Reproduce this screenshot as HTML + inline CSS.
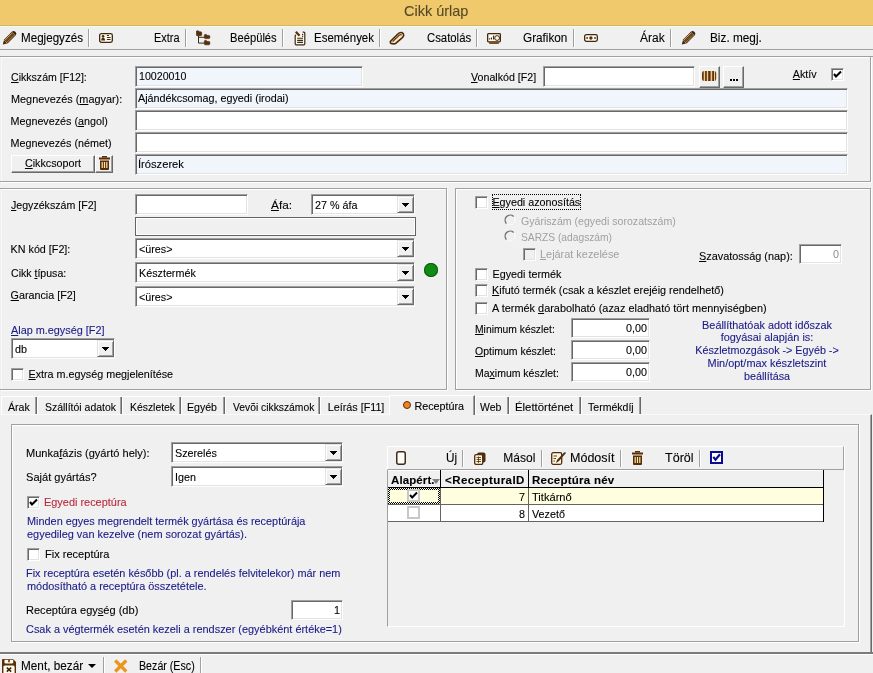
<!DOCTYPE html>
<html><head><meta charset="utf-8"><title>Cikk űrlap</title>
<style>
*{margin:0;padding:0}
body{width:873px;height:673px;position:relative;overflow:hidden;background:#f0f0f0;font-family:"Liberation Sans",sans-serif;font-size:11px;color:#000}
.a,.t,.sk,.rz,.cb{position:absolute}
.t{white-space:nowrap;-webkit-text-stroke-width:0.1px}
.sk{box-sizing:border-box;border:1px solid;border-color:#a0a0a0 #fff #fff #a0a0a0;box-shadow:inset 1px 1px 0 #696969,inset -1px -1px 0 #e3e3e3}
.rz{box-sizing:border-box;border:1px solid;border-color:#fff #696969 #696969 #fff;box-shadow:inset -1px -1px 0 #a0a0a0;background:#f0f0f0}
.cbtn{position:absolute;right:0;top:1px;width:17px;bottom:1px;box-sizing:border-box;border:1px solid;border-color:#e3e3e3 #696969 #696969 #e3e3e3;box-shadow:inset 1px 1px 0 #fff,inset -1px -1px 0 #a0a0a0;background:#f0f0f0}
.arr{position:absolute;left:4px;top:6px;width:7px;height:4px;background:linear-gradient(#000,#000) 0 0/7px 1px no-repeat,linear-gradient(#000,#000) 1px 1px/5px 1px no-repeat,linear-gradient(#000,#000) 2px 2px/3px 1px no-repeat,linear-gradient(#000,#000) 3px 3px/1px 1px no-repeat}
.cb{box-sizing:border-box;border:1px solid;border-color:#a0a0a0 #fff #fff #a0a0a0;box-shadow:inset 1px 1px 0 #696969,inset -1px -1px 0 #e3e3e3;background:#fff}
.cb.dis{background:#f0f0f0}
u{text-decoration:underline;text-underline-offset:1px}
.sep{position:absolute;width:1px;background:#a0a0a0;box-shadow:1px 0 0 #fff}
</style></head>
<body><div id="root" style="position:absolute;left:0;top:0;width:873px;height:673px;overflow:hidden;will-change:transform">
<div class="a" style="left:0;top:0;width:873px;height:26px;background:#f0c96c"></div>
<div class="t" style="left:403.5px;top:2.5px;font-size:14.6px;line-height:17px;transform:scaleX(0.9910);transform-origin:0 0;color:#544826;">Cikk úrlap</div>
<div class="a" style="left:0px;top:25px;width:873px;height:1px;background:#d2b46c"></div>
<div class="a" style="left:0px;top:26px;width:873px;height:1px;background:#fdf9e8"></div>
<div class="a" style="left:0px;top:49px;width:873px;height:1px;background:#a0a0a0"></div>
<div class="a" style="left:0px;top:56px;width:873px;height:1px;background:#a0a0a0"></div>
<div class="t" style="left:20.7px;top:31px;font-size:12px;line-height:14px;transform:scaleX(0.9683);transform-origin:0 0;-webkit-text-stroke-width:0.1px;">Megjegyzés</div>
<div class="t" style="left:153.7px;top:31px;font-size:12px;line-height:14px;transform:scaleX(0.9105);transform-origin:0 0;-webkit-text-stroke-width:0.1px;">Extra</div>
<div class="t" style="left:229.7px;top:31px;font-size:12px;line-height:14px;transform:scaleX(0.9333);transform-origin:0 0;-webkit-text-stroke-width:0.1px;">Beépülés</div>
<div class="t" style="left:314.2px;top:31px;font-size:12px;line-height:14px;transform:scaleX(0.9570);transform-origin:0 0;-webkit-text-stroke-width:0.1px;">Események</div>
<div class="t" style="left:426.5px;top:31px;font-size:12px;line-height:14px;transform:scaleX(0.9446);transform-origin:0 0;-webkit-text-stroke-width:0.1px;">Csatolás</div>
<div class="t" style="left:522.7px;top:31px;font-size:12px;line-height:14px;transform:scaleX(0.9790);transform-origin:0 0;-webkit-text-stroke-width:0.1px;">Grafikon</div>
<div class="t" style="left:640px;top:31px;font-size:12px;line-height:14px;-webkit-text-stroke-width:0.1px;">Árak</div>
<div class="t" style="left:710px;top:31px;font-size:12px;line-height:14px;transform:scaleX(0.9833);transform-origin:0 0;-webkit-text-stroke-width:0.1px;">Biz. megj.</div>
<div class="sep" style="left:88px;top:29px;height:18px"></div>
<div class="sep" style="left:185px;top:29px;height:18px"></div>
<div class="sep" style="left:282px;top:29px;height:18px"></div>
<div class="sep" style="left:379px;top:29px;height:18px"></div>
<div class="sep" style="left:476px;top:29px;height:18px"></div>
<div class="sep" style="left:573px;top:29px;height:18px"></div>
<div class="sep" style="left:670px;top:29px;height:18px"></div>
<svg class="a" style="left:1px;top:30px" width="17" height="16" viewBox="0 0 17 16"><path d="M1.8 14.6 L3.2 9.4 L10.9 1.7 Q12.6 0.2 14.6 1.9 Q16.3 3.6 14.5 5.5 L6.8 13.2 Z" fill="#3e2408"/><path d="M5.2 10.8 L11.6 4.4" stroke="#8a4e14" stroke-width="1.6"/><path d="M3.9 10.1 L10.8 3.2 M6.1 12.3 L13 5.4 M10.9 2.3 L14 5.4 M3.4 10.2 L6.2 13" stroke="#f3d6a4" stroke-width="0.7"/></svg>
<svg class="a" style="left:680px;top:30px" width="17" height="16" viewBox="0 0 17 16"><path d="M1.8 14.6 L3.2 9.4 L10.9 1.7 Q12.6 0.2 14.6 1.9 Q16.3 3.6 14.5 5.5 L6.8 13.2 Z" fill="#3e2408"/><path d="M5.2 10.8 L11.6 4.4" stroke="#8a4e14" stroke-width="1.6"/><path d="M3.9 10.1 L10.8 3.2 M6.1 12.3 L13 5.4 M10.9 2.3 L14 5.4 M3.4 10.2 L6.2 13" stroke="#f3d6a4" stroke-width="0.7"/></svg>
<svg class="a" style="left:99px;top:33px" width="14" height="10" viewBox="0 0 14 10"><rect x="0.65" y="0.65" width="12.7" height="8.7" rx="1.8" fill="#fffaf0" stroke="#3e2810" stroke-width="1.3"/><circle cx="4.1" cy="3.2" r="1.3" fill="#4a2a0c"/><path d="M2.2 7.6 Q2.4 4.4 4.1 4.4 Q5.8 4.4 6.1 7.6 Z" fill="#4a2a0c"/><path d="M7.9 2.5 H10 M7.9 4.5 H11.6 M7.9 6.5 H11.6" stroke="#3e2810" stroke-width="1.2"/></svg>
<svg class="a" style="left:196px;top:30px" width="15" height="16" viewBox="0 0 15 16"><path d="M0.3 1.8 Q0.3 0.8 1.3 0.8 H2.3 L3.3 1.8 H4.7 Q5.7 1.8 5.7 2.8 V4.7 Q5.7 5.7 4.7 5.7 H1.3 Q0.3 5.7 0.3 4.7 Z" fill="#5a3008" stroke="#3a1e04" stroke-width="0.6"/><path d="M8.3 5.4 Q8.3 4.4 9.3 4.4 H10.3 L11.3 5.4 H12.8 Q13.8 5.4 13.8 6.4 V7.600000000000001 Q13.8 8.600000000000001 12.8 8.600000000000001 H9.3 Q8.3 8.600000000000001 8.3 7.600000000000001 Z" fill="#5a3008" stroke="#3a1e04" stroke-width="0.6"/><path d="M8.3 11.4 Q8.3 10.4 9.3 10.4 H10.3 L11.3 11.4 H12.8 Q13.8 11.4 13.8 12.4 V13.8 Q13.8 14.8 12.8 14.8 H9.3 Q8.3 14.8 8.3 13.8 Z" fill="#5a3008" stroke="#3a1e04" stroke-width="0.6"/><path d="M2.5 5.6 V13.1 H8.4 M2.5 7.3 H8.4" stroke="#3e2810" stroke-width="1" fill="none"/></svg>
<svg class="a" style="left:294px;top:31px" width="12" height="15" viewBox="0 0 12 15"><path d="M2.2 4 Q1.2 4 1.2 5 V12.8 Q1.2 13.8 2.2 13.8 H9.8 Q10.8 13.8 10.8 12.8 V2.2 Q10.8 1.2 9.8 1.2 H8.6" stroke="#3e2810" stroke-width="1.2" fill="#fffaf0"/><path d="M1.8 0.8 L5.6 4.8" stroke="#5a3008" stroke-width="2.2"/><circle cx="8.6" cy="3.4" r="0.7" fill="#3e2810"/><circle cx="8.6" cy="5.2" r="0.7" fill="#3e2810"/><path d="M3.2 7.3 H9 M3.2 9.4 H9 M3.2 11.4 H9" stroke="#3e2810" stroke-width="1.1"/></svg>
<svg class="a" style="left:389px;top:31px" width="16" height="14" viewBox="0 0 16 14"><path d="M3 12.6 Q1 12.6 1.4 10.4 L8.6 3.2 Q10.6 1.2 12.8 1.6 Q15 2.4 14.6 4.6 Q14.4 5.6 13.4 6.6 L7 12.2 Q5.2 13.2 3 12.6 Z" fill="#fbe6c6" stroke="#4a2a0c" stroke-width="1.6"/><path d="M3.6 10.6 L10.2 4.2 Q11.6 3.2 12.6 4.2" fill="none" stroke="#6a3a10" stroke-width="1.3"/></svg>
<svg class="a" style="left:487px;top:33px" width="14" height="11" viewBox="0 0 14 11"><rect x="0.65" y="0.65" width="12.7" height="8.2" rx="0.8" fill="#fffaf0" stroke="#3e2810" stroke-width="1.3"/><path d="M2.6 6.6 V5.2 M4.5 6.6 V4.6 M6.6 6.6 V2.4" stroke="#3e2810" stroke-width="1.1"/><circle cx="10.1" cy="5" r="2.4" fill="#fffaf0" stroke="#3e2810" stroke-width="1"/><rect x="2.2" y="8.8" width="9.6" height="2.2" fill="#7a5024"/></svg>
<svg class="a" style="left:584px;top:34px" width="14" height="8" viewBox="0 0 14 8"><rect x="0.65" y="0.65" width="12.7" height="6.7" rx="1.8" fill="#fffaf0" stroke="#3e2810" stroke-width="1.3"/><circle cx="6.9" cy="4" r="1.7" fill="#5a3008"/><rect x="2.3" y="3.2" width="1.6" height="1.6" fill="#3e2810"/><rect x="10.2" y="3.2" width="1.6" height="1.6" fill="#3e2810"/></svg>
<div class="a" style="left:1px;top:57px;width:871px;height:1px;background:#fff"></div>
<div class="a" style="left:1px;top:182px;width:871px;height:1px;background:#fff"></div>
<div class="a" style="left:871px;top:57px;width:1px;height:126px;background:#fff"></div>
<div class="a" style="left:1px;top:57px;width:1px;height:125px;background:#f8f8f8"></div>
<div class="a" style="left:0px;top:56px;width:871px;height:1px;background:#a0a0a0"></div>
<div class="a" style="left:0px;top:181px;width:871px;height:1px;background:#a0a0a0"></div>
<div class="a" style="left:870px;top:56px;width:1px;height:126px;background:#a0a0a0"></div>
<div class="t" style="left:10.5px;top:71px;font-size:10.75px;line-height:12px;transform:scaleX(0.9837);transform-origin:0 0;"><u>C</u>ikkszám [F12]:</div>
<div class="t" style="left:10.5px;top:93px;font-size:10.75px;line-height:12px;transform:scaleX(1.0116);transform-origin:0 0;">Megnevezés (<u>m</u>agyar):</div>
<div class="t" style="left:10.5px;top:115px;font-size:10.75px;line-height:12px;">Megnevezés (<u>a</u>ngol)</div>
<div class="t" style="left:10.5px;top:137px;font-size:10.75px;line-height:12px;">Megnevezés (német)</div>
<div class="sk" style="left:135px;top:66px;width:228px;height:21px;background:#f1f5fc"></div>
<div class="t" style="left:138.5px;top:70px;font-size:10.75px;line-height:12px;transform:scaleX(0.9889);transform-origin:0 0;">10020010</div>
<div class="sk" style="left:135px;top:88px;width:713px;height:21px;background:#f1f5fc"></div>
<div class="t" style="left:138px;top:92px;font-size:10.75px;line-height:12px;">Ajándékcsomag, egyedi (irodai)</div>
<div class="sk" style="left:135px;top:110px;width:713px;height:21px;background:#fff"></div>
<div class="sk" style="left:135px;top:132px;width:713px;height:21px;background:#fff"></div>
<div class="sk" style="left:135px;top:154px;width:713px;height:21px;background:#f1f5fc"></div>
<div class="t" style="left:137.5px;top:158px;font-size:10.75px;line-height:12px;transform:scaleX(1.0383);transform-origin:0 0;">Írószerek</div>
<div class="rz" style="left:11px;top:155px;width:84px;height:18px;"></div>
<div class="t" style="left:11px;top:157px;font-size:10.75px;line-height:12px;width:84px;text-align:center;"><u>C</u>ikkcsoport</div>
<div class="rz" style="left:95px;top:155px;width:18px;height:18px;"></div>
<svg class="a" style="left:99px;top:156px" width="11" height="14" viewBox="0 0 11 14"><rect x="3" y="0" width="5" height="1.5" fill="#5a2e00"/><rect x="0" y="1.5" width="11" height="2" fill="#5a2e00"/><path d="M1 4.5 H10 V13 Q10 14 9 14 H2 Q1 14 1 13 Z" fill="#5a2e00"/><rect x="2.6" y="6" width="1.2" height="6" fill="#ffe6b0"/><rect x="4.9" y="6" width="1.2" height="6" fill="#ffe6b0"/><rect x="7.2" y="6" width="1.2" height="6" fill="#ffe6b0"/></svg>
<div class="t" style="left:471px;top:71px;font-size:10.75px;line-height:12px;transform:scaleX(0.9918);transform-origin:0 0;"><u>V</u>onalkód [F2]</div>
<div class="sk" style="left:543px;top:66px;width:152px;height:21px;background:#fff"></div>
<div class="rz" style="left:699px;top:66px;width:21px;height:22px;"></div>
<svg class="a" style="left:702px;top:71px" width="15" height="10" viewBox="0 0 15 10"><rect x="0" y="0" width="14.2" height="10" rx="2.2" fill="#5e3208"/><rect x="1.7" y="0" width="1.4" height="10" fill="#f2c890"/><rect x="4.8" y="0" width="1.4" height="10" fill="#f2c890"/><rect x="8.6" y="0" width="1.6" height="10" fill="#f2c890"/><rect x="12" y="0" width="1.1" height="10" fill="#f2c890"/></svg>
<div class="rz" style="left:723px;top:66px;width:21px;height:22px;"></div>
<div class="a" style="left:729.5px;top:79px;width:8px;height:2px;background:repeating-linear-gradient(90deg,#000 0 2px,transparent 2px 3px)"></div>
<div class="t" style="left:792.8px;top:68px;font-size:10.75px;line-height:12px;"><u>A</u>ktív</div>
<div class="cb" style="left:831px;top:68px;width:13px;height:13px;"><svg width="9" height="9" viewBox="0 0 9 9" style="position:absolute;left:1px;top:1px"><path d="M1 4 L3 6.5 L8 1.5" stroke="#000" stroke-width="2.1" fill="none"/></svg></div>
<div class="a" style="left:1px;top:189px;width:447px;height:1px;background:#fff"></div>
<div class="a" style="left:1px;top:390px;width:447px;height:1px;background:#fff"></div>
<div class="a" style="left:447px;top:189px;width:1px;height:202px;background:#fff"></div>
<div class="a" style="left:1px;top:189px;width:1px;height:201px;background:#f8f8f8"></div>
<div class="a" style="left:0px;top:188px;width:447px;height:1px;background:#a0a0a0"></div>
<div class="a" style="left:0px;top:389px;width:447px;height:1px;background:#a0a0a0"></div>
<div class="a" style="left:446px;top:188px;width:1px;height:202px;background:#a0a0a0"></div>
<div class="t" style="left:10.6px;top:199px;font-size:10.75px;line-height:12px;transform:scaleX(0.9870);transform-origin:0 0;"><u>J</u>egyzékszám [F2]</div>
<div class="sk" style="left:135px;top:194px;width:113px;height:21px;background:#fff"></div>
<div class="t" style="left:270.5px;top:199px;font-size:10.75px;line-height:12px;transform:scaleX(1.0982);transform-origin:0 0;"><u>Á</u>fa:</div>
<div class="sk" style="left:311px;top:194px;width:104px;height:21px;background:#fff"><div class="cbtn"><div class="arr"></div></div></div>
<div class="t" style="left:315px;top:199px;font-size:10.75px;line-height:12px;">27 % áfa</div>
<div class="a" style="left:135px;top:217px;width:281px;height:19px;box-sizing:border-box;border:1px solid #646464;box-shadow:inset 1px 1px 0 #fff,inset -1px -1px 0 #fff;background:#f0f0f0"></div>
<div class="t" style="left:10.6px;top:243px;font-size:10.75px;line-height:12px;">KN kód [F2]:</div>
<div class="sk" style="left:135px;top:238px;width:280px;height:21px;background:#fff"><div class="cbtn"><div class="arr"></div></div></div>
<div class="t" style="left:139px;top:243px;font-size:10.75px;line-height:12px;">&lt;üres&gt;</div>
<div class="t" style="left:10.6px;top:267px;font-size:10.75px;line-height:12px;transform:scaleX(0.9829);transform-origin:0 0;">Cikk <u>t</u>ípusa:</div>
<div class="sk" style="left:135px;top:262px;width:280px;height:21px;background:#fff"><div class="cbtn"><div class="arr"></div></div></div>
<div class="t" style="left:139px;top:267px;font-size:10.75px;line-height:12px;">Késztermék</div>
<div class="t" style="left:10.6px;top:289px;font-size:10.75px;line-height:12px;"><u>G</u>arancia [F2]</div>
<div class="sk" style="left:135px;top:286px;width:280px;height:21px;background:#fff"><div class="cbtn"><div class="arr"></div></div></div>
<div class="t" style="left:139px;top:291px;font-size:10.75px;line-height:12px;">&lt;üres&gt;</div>
<div class="a" style="left:424px;top:263px;width:14px;height:14px;border-radius:50%;background:#138a13;box-shadow:inset 0 0 0 1px #0b5e0b"></div>
<div class="t" style="left:10.6px;top:324px;font-size:10.75px;line-height:12px;transform:scaleX(1.0096);transform-origin:0 0;color:#1a1a88;"><u>A</u>lap m.egység [F2]</div>
<div class="sk" style="left:11px;top:338px;width:104px;height:21px;background:#fff"><div class="cbtn"><div class="arr"></div></div></div>
<div class="t" style="left:15px;top:343px;font-size:10.75px;line-height:12px;">db</div>
<div class="cb" style="left:11px;top:368px;width:13px;height:13px;"></div>
<div class="t" style="left:28.5px;top:368px;font-size:10.75px;line-height:12px;"><u>E</u>xtra m.egység megjelenítése</div>
<div class="a" style="left:456px;top:189px;width:416px;height:202px;border:1px solid #fff;box-sizing:border-box"></div>
<div class="a" style="left:455px;top:188px;width:416px;height:202px;border:1px solid #a0a0a0;box-sizing:border-box"></div>
<div class="cb" style="left:475px;top:196px;width:13px;height:13px;"></div>
<div class="t" style="left:492.4px;top:196px;font-size:10.75px;line-height:12px;"><u>E</u>gyedi azonosítás</div>
<div class="a" style="left:492px;top:194px;width:89px;height:16px;box-sizing:border-box;border:1px dotted #000"></div>
<svg class="a" style="left:504px;top:214px" width="12" height="12" viewBox="0 0 12 12"><circle cx="6" cy="6" r="5" fill="#f0f0f0" stroke="#fafafa" stroke-width="1"/><path d="M9.6 2.4 A5.1 5.1 0 0 0 2.4 9.6" stroke="#6e6e6e" stroke-width="1.4" fill="none"/></svg>
<div class="t" style="left:521px;top:215px;font-size:10.75px;line-height:12px;transform:scaleX(0.9853);transform-origin:0 0;color:#a0a0a0;-webkit-text-stroke-width:0;">Gyáriszám (egyedi sorozatszám)</div>
<svg class="a" style="left:504px;top:230px" width="12" height="12" viewBox="0 0 12 12"><circle cx="6" cy="6" r="5" fill="#f0f0f0" stroke="#fafafa" stroke-width="1"/><path d="M9.6 2.4 A5.1 5.1 0 0 0 2.4 9.6" stroke="#6e6e6e" stroke-width="1.4" fill="none"/></svg>
<div class="t" style="left:521px;top:231px;font-size:10.75px;line-height:12px;transform:scaleX(0.9520);transform-origin:0 0;color:#a0a0a0;-webkit-text-stroke-width:0;">SARZS (adagszám)</div>
<div class="cb dis" style="left:523px;top:248px;width:13px;height:13px;"></div>
<div class="t" style="left:540px;top:248px;font-size:10.75px;line-height:12px;transform:scaleX(1.0143);transform-origin:0 0;color:#a0a0a0;-webkit-text-stroke-width:0;"><u>L</u>ejárat kezelése</div>
<div class="t" style="left:698.8px;top:250px;font-size:10.75px;line-height:12px;transform:scaleX(1.0128);transform-origin:0 0;"><u>S</u>zavatosság (nap):</div>
<div class="sk" style="left:799px;top:244px;width:43px;height:20px;background:#fff"></div>
<div class="t" style="left:799px;top:248px;font-size:10.75px;line-height:12px;color:#8c8c8c;-webkit-text-stroke-width:0;width:40px;text-align:right;">0</div>
<div class="cb" style="left:475px;top:268px;width:13px;height:13px;"></div>
<div class="t" style="left:492.6px;top:268px;font-size:10.75px;line-height:12px;">Egyedi termék</div>
<div class="cb" style="left:475px;top:284px;width:13px;height:13px;"></div>
<div class="t" style="left:492.3px;top:284px;font-size:10.75px;line-height:12px;transform:scaleX(1.0081);transform-origin:0 0;"><u>K</u>ifutó termék (csak a készlet erejéig rendelhető)</div>
<div class="cb" style="left:475px;top:302px;width:13px;height:13px;"></div>
<div class="t" style="left:492.3px;top:302px;font-size:10.75px;line-height:12px;transform:scaleX(1.0144);transform-origin:0 0;">A termék <u>d</u>arabolható (azaz eladható tört mennyiségben)</div>
<div class="t" style="left:474.9px;top:323px;font-size:10.75px;line-height:12px;transform:scaleX(0.9611);transform-origin:0 0;"><u>M</u>inimum készlet:</div>
<div class="t" style="left:474.9px;top:345px;font-size:10.75px;line-height:12px;transform:scaleX(0.9743);transform-origin:0 0;"><u>O</u>ptimum készlet:</div>
<div class="t" style="left:474.9px;top:367px;font-size:10.75px;line-height:12px;transform:scaleX(0.9754);transform-origin:0 0;">Ma<u>x</u>imum készlet:</div>
<div class="sk" style="left:571px;top:318px;width:79px;height:20px;background:#fff"></div>
<div class="t" style="left:571px;top:322px;font-size:10.75px;line-height:12px;width:76px;text-align:right;">0,00</div>
<div class="sk" style="left:571px;top:340px;width:79px;height:20px;background:#fff"></div>
<div class="t" style="left:571px;top:344px;font-size:10.75px;line-height:12px;width:76px;text-align:right;">0,00</div>
<div class="sk" style="left:571px;top:362px;width:79px;height:20px;background:#fff"></div>
<div class="t" style="left:571px;top:366px;font-size:10.75px;line-height:12px;width:76px;text-align:right;">0,00</div>
<div class="t" style="left:667px;top:319px;font-size:10.75px;line-height:12px;transform:scaleX(1.0102);transform-origin:50% 0;color:#1a1a88;width:200px;text-align:center;">Beállíthatóak adott időszak</div>
<div class="t" style="left:667px;top:331px;font-size:10.75px;line-height:12px;transform:scaleX(1.0128);transform-origin:50% 0;color:#1a1a88;width:200px;text-align:center;">fogyásai alapján is:</div>
<div class="t" style="left:667px;top:344px;font-size:10.75px;line-height:12px;color:#1a1a88;width:200px;text-align:center;">Készletmozgások -&gt; Egyéb -&gt;</div>
<div class="t" style="left:667px;top:357px;font-size:10.75px;line-height:12px;transform:scaleX(1.0146);transform-origin:50% 0;color:#1a1a88;width:200px;text-align:center;">Min/opt/max készletszint</div>
<div class="t" style="left:667px;top:370px;font-size:10.75px;line-height:12px;color:#1a1a88;width:200px;text-align:center;">beállítása</div>
<div class="a" style="left:0;top:414px;width:872px;height:240px;box-sizing:border-box;border-top:1px solid #fafafa;border-right:1px solid #696969;border-bottom:1px solid #696969;box-shadow:inset -1px -1px 0 #a0a0a0"></div>
<div class="a" style="left:1px;top:396px;width:36px;height:18px;box-sizing:border-box;border-top:1px solid #fff;border-left:1px solid #fff;border-top-left-radius:2px;box-shadow:inset -1px 0 0 #696969,inset -2px 0 0 #a0a0a0"></div>
<div class="t" style="left:8px;top:401px;font-size:10.75px;line-height:12px;transform:scaleX(0.9863);transform-origin:0 0;">Árak</div>
<div class="a" style="left:37px;top:396px;width:85px;height:18px;box-sizing:border-box;border-top:1px solid #fff;border-left:1px solid #fff;border-top-left-radius:2px;box-shadow:inset -1px 0 0 #696969,inset -2px 0 0 #a0a0a0"></div>
<div class="t" style="left:45.4px;top:401px;font-size:10.75px;line-height:12px;transform:scaleX(0.9739);transform-origin:0 0;">Szállítói adatok</div>
<div class="a" style="left:122px;top:396px;width:59px;height:18px;box-sizing:border-box;border-top:1px solid #fff;border-left:1px solid #fff;border-top-left-radius:2px;box-shadow:inset -1px 0 0 #696969,inset -2px 0 0 #a0a0a0"></div>
<div class="t" style="left:130px;top:401px;font-size:10.75px;line-height:12px;transform:scaleX(0.9655);transform-origin:0 0;">Készletek</div>
<div class="a" style="left:181px;top:396px;width:44px;height:18px;box-sizing:border-box;border-top:1px solid #fff;border-left:1px solid #fff;border-top-left-radius:2px;box-shadow:inset -1px 0 0 #696969,inset -2px 0 0 #a0a0a0"></div>
<div class="t" style="left:187px;top:401px;font-size:10.75px;line-height:12px;transform:scaleX(0.9842);transform-origin:0 0;">Egyéb</div>
<div class="a" style="left:225px;top:396px;width:95px;height:18px;box-sizing:border-box;border-top:1px solid #fff;border-left:1px solid #fff;border-top-left-radius:2px;box-shadow:inset -1px 0 0 #696969,inset -2px 0 0 #a0a0a0"></div>
<div class="t" style="left:233.4px;top:401px;font-size:10.75px;line-height:12px;transform:scaleX(0.9583);transform-origin:0 0;">Vevõi cikkszámok</div>
<div class="a" style="left:320px;top:396px;width:70px;height:18px;box-sizing:border-box;border-top:1px solid #fff;border-left:1px solid #fff;border-top-left-radius:2px;"></div>
<div class="t" style="left:327.8px;top:401px;font-size:10.75px;line-height:12px;">Leírás [F11]</div>
<div class="a" style="left:475px;top:396px;width:34px;height:18px;box-sizing:border-box;border-top:1px solid #fff;border-left:1px solid #fff;border-top-left-radius:2px;box-shadow:inset -1px 0 0 #696969,inset -2px 0 0 #a0a0a0"></div>
<div class="t" style="left:479.7px;top:401px;font-size:10.75px;line-height:12px;transform:scaleX(0.9722);transform-origin:0 0;">Web</div>
<div class="a" style="left:509px;top:396px;width:72px;height:18px;box-sizing:border-box;border-top:1px solid #fff;border-left:1px solid #fff;border-top-left-radius:2px;box-shadow:inset -1px 0 0 #696969,inset -2px 0 0 #a0a0a0"></div>
<div class="t" style="left:515.4px;top:401px;font-size:10.75px;line-height:12px;transform:scaleX(1.0586);transform-origin:0 0;">Élettörténet</div>
<div class="a" style="left:581px;top:396px;width:60px;height:18px;box-sizing:border-box;border-top:1px solid #fff;border-left:1px solid #fff;border-top-left-radius:2px;box-shadow:inset -1px 0 0 #696969,inset -2px 0 0 #a0a0a0"></div>
<div class="t" style="left:587.6px;top:401px;font-size:10.75px;line-height:12px;transform:scaleX(0.9808);transform-origin:0 0;">Termékdíj</div>
<div class="a" style="left:389px;top:395px;width:86px;height:20px;background:#f0f0f0;box-sizing:border-box;border-top:1px solid #fff;border-left:1px solid #fff;border-right:1px solid #696969;box-shadow:inset -1px 0 0 #a0a0a0"></div>
<div class="a" style="left:403px;top:401px;width:8px;height:8px;border-radius:50%;background:#f58220;box-sizing:border-box;border:1px solid #5a3000"></div>
<div class="t" style="left:414.4px;top:400px;font-size:10.75px;line-height:12px;">Receptúra</div>
<div class="a" style="left:12px;top:425px;width:848px;height:218px;border:1px solid #fff;box-sizing:border-box"></div>
<div class="a" style="left:11px;top:424px;width:848px;height:218px;border:1px solid #a0a0a0;box-sizing:border-box"></div>
<div class="t" style="left:26.3px;top:447px;font-size:10.75px;line-height:12px;transform:scaleX(1.0284);transform-origin:0 0;">Munka<u>f</u>ázis (gyártó hely):</div>
<div class="sk" style="left:171px;top:442px;width:172px;height:21px;background:#fff"><div class="cbtn"><div class="arr"></div></div></div>
<div class="t" style="left:175px;top:447px;font-size:10.75px;line-height:12px;">Szerelés</div>
<div class="t" style="left:26.3px;top:471px;font-size:10.75px;line-height:12px;transform:scaleX(1.0288);transform-origin:0 0;">Saját gyártás?</div>
<div class="sk" style="left:171px;top:466px;width:172px;height:21px;background:#fff"><div class="cbtn"><div class="arr"></div></div></div>
<div class="t" style="left:175px;top:471px;font-size:10.75px;line-height:12px;">Igen</div>
<div class="cb" style="left:27px;top:496px;width:13px;height:13px;"><svg width="9" height="9" viewBox="0 0 9 9" style="position:absolute;left:1px;top:1px"><path d="M1 4 L3 6.5 L8 1.5" stroke="#000" stroke-width="2.1" fill="none"/></svg></div>
<div class="t" style="left:44px;top:496px;font-size:10.75px;line-height:12px;transform:scaleX(1.0164);transform-origin:0 0;color:#b82a3c;">Egyedi receptúra</div>
<div class="t" style="left:26.5px;top:515px;font-size:10.75px;line-height:12px;transform:scaleX(1.0129);transform-origin:0 0;color:#1a1a88;">Minden egyes megrendelt termék gyártása és receptúrája</div>
<div class="t" style="left:26.5px;top:528px;font-size:10.75px;line-height:12px;transform:scaleX(1.0171);transform-origin:0 0;color:#1a1a88;">egyedileg van kezelve (nem sorozat gyártás).</div>
<div class="cb" style="left:27px;top:548px;width:13px;height:13px;"></div>
<div class="t" style="left:44.5px;top:548px;font-size:10.75px;line-height:12px;transform:scaleX(1.0266);transform-origin:0 0;">Fix receptúra</div>
<div class="t" style="left:26.3px;top:567px;font-size:10.75px;line-height:12px;transform:scaleX(1.0139);transform-origin:0 0;color:#1a1a88;">Fix receptúra esetén később (pl. a rendelés felvitelekor) már nem</div>
<div class="t" style="left:26.5px;top:580px;font-size:10.75px;line-height:12px;transform:scaleX(1.0148);transform-origin:0 0;color:#1a1a88;">módosítható a receptúra összetétele.</div>
<div class="t" style="left:26.3px;top:604px;font-size:10.75px;line-height:12px;transform:scaleX(1.0270);transform-origin:0 0;">Receptúra egy<u>s</u>ég (db)</div>
<div class="sk" style="left:291px;top:600px;width:52px;height:20px;background:#fff"></div>
<div class="t" style="left:291px;top:604px;font-size:10.75px;line-height:12px;width:49px;text-align:right;">1</div>
<div class="t" style="left:26.3px;top:623px;font-size:10.75px;line-height:12px;transform:scaleX(1.0154);transform-origin:0 0;color:#1a1a88;">Csak a végtermék esetén kezeli a rendszer (egyébként értéke=1)</div>
<div class="a" style="left:387px;top:446px;width:458px;height:181px;box-sizing:border-box;border-left:1px solid #a0a0a0;border-right:1px solid #fff;border-bottom:1px solid #fff"></div>
<div class="a" style="left:387px;top:446px;width:457px;height:24px;box-sizing:border-box;border-top:1px solid #fff;border-left:1px solid #fff;border-bottom:1px solid #a0a0a0;border-right:1px solid #a0a0a0;background:#f0f0f0"></div>
<svg class="a" style="left:396px;top:451px" width="10" height="14" viewBox="0 0 10 14"><rect x="0.75" y="0.75" width="8.5" height="12.5" rx="2" fill="#fffdf6" stroke="#3e2c1a" stroke-width="1.5"/></svg>
<div class="t" style="left:445.6px;top:451px;font-size:12px;line-height:14px;transform:scaleX(0.9795);transform-origin:0 0;-webkit-text-stroke-width:0.1px;">Új</div>
<div class="sep" style="left:462px;top:450px;height:17px"></div>
<svg class="a" style="left:474px;top:452px" width="12" height="13" viewBox="0 0 12 13"><rect x="3" y="0.5" width="8.5" height="10" rx="2" fill="#4e2c0c"/><rect x="0.7" y="2.7" width="8" height="9.8" rx="1.5" fill="#fff4dc" stroke="#4e2c0c" stroke-width="1.3"/><path d="M2.5 5.5 H7 M2.5 7.5 H7 M2.5 9.5 H7 M4.5 4.5 V11" stroke="#4e2c0c" stroke-width="0.8"/></svg>
<div class="t" style="left:503.3px;top:451px;font-size:12px;line-height:14px;-webkit-text-stroke-width:0.1px;">Másol</div>
<div class="sep" style="left:541px;top:450px;height:17px"></div>
<svg class="a" style="left:551px;top:451px" width="16" height="14" viewBox="0 0 16 14"><rect x="0.7" y="1.7" width="10" height="11.6" rx="1.5" fill="#fff4dc" stroke="#4e2c0c" stroke-width="1.3"/><path d="M2.5 5 H6 M2.5 7.5 H5 M2.5 10 H4" stroke="#4e2c0c" stroke-width="0.9"/><path d="M5 12 L6 9 L13 1.5 Q14.5 0.8 15 2 L8 10 Z" fill="#4e2c0c"/></svg>
<div class="t" style="left:570px;top:451px;font-size:12px;line-height:14px;transform:scaleX(1.0425);transform-origin:0 0;-webkit-text-stroke-width:0.1px;">Módosít</div>
<div class="sep" style="left:620px;top:450px;height:17px"></div>
<svg class="a" style="left:632px;top:451px" width="11" height="14" viewBox="0 0 11 14"><rect x="3" y="0" width="5" height="1.5" fill="#5a2e00"/><rect x="0" y="1.5" width="11" height="2" fill="#5a2e00"/><path d="M1 4.5 H10 V13 Q10 14 9 14 H2 Q1 14 1 13 Z" fill="#5a2e00"/><rect x="2.6" y="6" width="1.2" height="6" fill="#ffe6b0"/><rect x="4.9" y="6" width="1.2" height="6" fill="#ffe6b0"/><rect x="7.2" y="6" width="1.2" height="6" fill="#ffe6b0"/></svg>
<div class="t" style="left:665px;top:451px;font-size:12px;line-height:14px;transform:scaleX(1.0461);transform-origin:0 0;-webkit-text-stroke-width:0.1px;">Töröl</div>
<div class="sep" style="left:699px;top:450px;height:17px"></div>
<svg class="a" style="left:710px;top:451px" width="13" height="13" viewBox="0 0 13 13"><rect x="1" y="1" width="11" height="11" fill="#fff" stroke="#0c0c90" stroke-width="2"/><path d="M3.3 5.8 L5.5 8.8 L10 3.2" stroke="#0c0c90" stroke-width="2.2" fill="none"/></svg>
<div class="a" style="left:388px;top:470px;width:436px;height:17px;background:#f0f0f0;box-sizing:border-box;border-top:1px solid #fff"></div>
<div class="a" style="left:388px;top:487px;width:436px;height:1px;background:#000"></div>
<div class="a" style="left:388px;top:488px;width:435px;height:16px;background:#ffffe0"></div>
<div class="a" style="left:388px;top:505px;width:435px;height:16px;background:#fff"></div>
<div class="a" style="left:388px;top:504px;width:436px;height:1px;background:#646464"></div>
<div class="a" style="left:388px;top:521px;width:436px;height:1px;background:#646464"></div>
<div class="a" style="left:823px;top:470px;width:1px;height:52px;background:#000"></div>
<div class="a" style="left:440px;top:470px;width:1px;height:17px;background:#000"></div>
<div class="a" style="left:528px;top:470px;width:1px;height:17px;background:#000"></div>
<div class="a" style="left:440px;top:488px;width:1px;height:33px;background:#646464"></div>
<div class="a" style="left:528px;top:488px;width:1px;height:33px;background:#646464"></div>
<div class="t" style="left:391px;top:474px;font-size:11.5px;line-height:13px;font-weight:bold;letter-spacing:0.1px">Alapért.</div>
<div class="t" style="left:445px;top:474px;font-size:11.5px;line-height:13px;font-weight:bold;letter-spacing:0.45px">&lt;RecepturaID</div>
<div class="t" style="left:532px;top:474px;font-size:11.5px;line-height:13px;font-weight:bold;letter-spacing:0.25px">Receptúra név</div>
<div class="a" style="left:432px;top:479px;width:0;height:0;border-left:4px solid transparent;border-right:4px solid transparent;border-top:5px solid #808080"></div>
<div class="a" style="left:388px;top:488px;width:52px;height:2px;background:repeating-conic-gradient(#000 0 25%,transparent 0 50%) 0 0/2px 2px"></div>
<div class="a" style="left:388px;top:502px;width:52px;height:2px;background:repeating-conic-gradient(#000 0 25%,transparent 0 50%) 0 0/2px 2px"></div>
<div class="a" style="left:388px;top:488px;width:2px;height:16px;background:repeating-conic-gradient(#000 0 25%,transparent 0 50%) 0 0/2px 2px"></div>
<div class="a" style="left:438px;top:488px;width:2px;height:16px;background:repeating-conic-gradient(#000 0 25%,transparent 0 50%) 0 0/2px 2px"></div>
<div class="a" style="left:407px;top:489px;width:13px;height:13px;box-sizing:border-box;border:2px solid #c8c8c8;background:#fff"><svg width="9" height="9" viewBox="0 0 9 9" style="position:absolute;left:0;top:0"><path d="M1 4 L3.2 6.5 L8 1.5" stroke="#000" stroke-width="1.9" fill="none"/></svg></div>
<div class="t" style="left:441px;top:491px;font-size:10.75px;line-height:12px;width:84px;text-align:right;">7</div>
<div class="t" style="left:532px;top:491px;font-size:10.75px;line-height:12px;transform:scaleX(1.0330);transform-origin:0 0;">Titkárnő</div>
<div class="a" style="left:407px;top:506px;width:13px;height:13px;box-sizing:border-box;border:2px solid #c8c8c8;background:#fff"></div>
<div class="t" style="left:441px;top:508px;font-size:10.75px;line-height:12px;width:84px;text-align:right;">8</div>
<div class="t" style="left:532px;top:508px;font-size:10.75px;line-height:12px;">Vezető</div>
<div class="a" style="left:0;top:652px;width:873px;height:2px;background:#7a7a7a"></div>
<div class="a" style="left:0;top:654px;width:873px;height:1px;background:#fff"></div>
<svg class="a" style="left:2px;top:659px" width="14" height="14" viewBox="0 0 14 14"><path d="M0 1 Q0 0 1 0 H11 L14 3 V14 H0 Z" fill="#5a3008"/><path d="M2.5 0.8 H11.2 V3.2 Q11.2 4.6 9.8 4.6 H3.9 Q2.5 4.6 2.5 3.2 Z" fill="#fffaf0"/><rect x="6.2" y="0.8" width="1.6" height="2.5" fill="#5a3008"/><path d="M1.4 8 Q1.4 6.5 2.9 6.5 H11.1 Q12.6 6.5 12.6 8 V14 H1.4 Z" fill="#fffaf0"/><path d="M4.8 8.6 L9.2 12.6 M9.2 8.6 L4.8 12.6" stroke="#3a2008" stroke-width="1.5"/></svg>
<div class="t" style="left:20.7px;top:659px;font-size:12px;line-height:14px;transform:scaleX(0.9801);transform-origin:0 0;-webkit-text-stroke-width:0.1px;">Ment, bezár</div>
<div class="a" style="left:88px;top:664px;width:0;height:0;border-left:4px solid transparent;border-right:4px solid transparent;border-top:4px solid #000"></div>
<div class="sep" style="left:103px;top:657px;height:16px"></div>
<svg class="a" style="left:113px;top:659px" width="16" height="14" viewBox="0 0 16 14"><path d="M2.2 1.5 L13.3 12.5 M13.3 1.5 L2.2 12.5" stroke="#ec951c" stroke-width="3.2"/></svg>
<div class="t" style="left:138.6px;top:659px;font-size:12px;line-height:14px;transform:scaleX(0.8887);transform-origin:0 0;-webkit-text-stroke-width:0.1px;">Bezár (Esc)</div>
<div class="sep" style="left:200px;top:657px;height:16px"></div>
</div></body></html>
